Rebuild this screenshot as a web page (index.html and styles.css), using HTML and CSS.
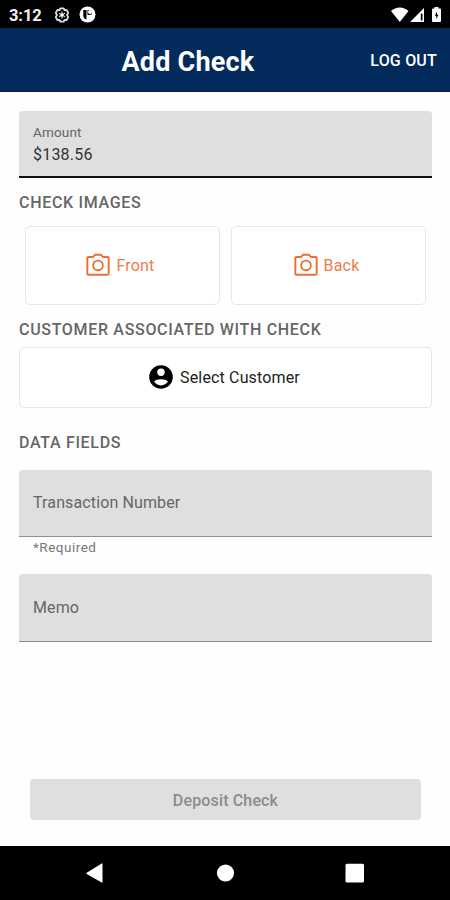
FILE: index.html
```html
<!DOCTYPE html>
<html lang="en">
<head>
<meta charset="utf-8">
<title>Add Check</title>
<link rel="stylesheet" href="styles.css">
</head>
<body>
<div class="status">
  <span class="clock">3:12</span>
  <svg class="gear" width="16" height="16" viewBox="0 0 16 16" fill="none" stroke="#dcdcdc"><path stroke-width="1.800" stroke-linejoin="round" d="M6.300 1.300h3.400l.8 1.900 2.100-.2 1.700 2.900L13 8l1.300 2.100-1.700 2.900-2.100-.2-.8 1.900H6.300l-.8-1.900-2.100.2-1.700-2.900L3 8 1.700 5.900 3.400 3l2.100.2z"/><path stroke-width="1.200" d="M8 4.500v7M5 6.200l6 3.600M11 6.200 5 9.800"/><circle cx="8" cy="8" r="1.600" fill="#fff" stroke="none"/></svg>
  <svg class="badge" width="17" height="17" viewBox="0 0 17 17"><circle cx="8.500" cy="8.500" r="8" fill="#fff"/><path d="M4.300 4h3.200v9.500c-2.200-.5-3.200-2-3.200-4zM8.500 4h2a2.500 2.500 0 0 1 0 5h-2z" fill="#000"/><circle cx="11" cy="6" r="2" fill="#fff"/></svg>
  <span class="grow"></span>
  <svg class="signals" width="53" height="16" viewBox="0 0 53 16"><path fill="#fff" d="M0 4C5-.8 12.500-.8 17.500 4L8.800 15zM19 15 33 1v14z"/><path fill="#000" d="M29.800 6.500h1.700v7h-1.700z"/><path fill="#fff" d="M43.500 1.500V0h4v1.500h1.500q1 0 1 1V14q0 1-1 1h-7q-1 0-1-1V2.500q0-1 1-1z"/><path d="m46 4.500-2.200 4.200h1.500v3.200l2.200-4.200H46z" fill="#000"/></svg>
</div>
<header class="bar"><span></span><h1>Add Check</h1><span class="logout">LOG OUT</span></header>
<main>
  <div class="field active"><span class="caption">Amount</span><span class="value">$138.56</span></div>
  <h2 class="images">CHECK IMAGES</h2>
  <div class="cards">
    <div class="card orange"><svg class="camera" width="24" height="24" viewBox="0 0 24 24" fill="none" stroke="#ec6e31" stroke-width="1.900" stroke-linejoin="round"><path d="M2.500 4h4.600l2-2.300h5.800L16.900 4h4.600q1.200 0 1.200 1.200v15.300q0 1.200-1.200 1.200h-19q-1.200 0-1.200-1.200V5.200Q1.300 4 2.500 4z"/><circle cx="12" cy="12.400" r="4.800"/></svg><span class="front">Front</span></div>
    <div class="card orange"><svg class="camera" width="24" height="24" viewBox="0 0 24 24" fill="none" stroke="#ec6e31" stroke-width="1.900" stroke-linejoin="round"><path d="M2.500 4h4.600l2-2.300h5.800L16.900 4h4.600q1.200 0 1.200 1.200v15.300q0 1.200-1.200 1.200h-19q-1.200 0-1.200-1.200V5.200Q1.300 4 2.500 4z"/><circle cx="12" cy="12.400" r="4.800"/></svg><span class="back">Back</span></div>
  </div>
  <h2 class="customer">CUSTOMER ASSOCIATED WITH CHECK</h2>
  <div class="card select"><svg width="24" height="24" viewBox="0 0 24 24"><circle cx="12" cy="12" r="11.800"/><circle cx="12" cy="7.200" r="3.700" fill="#fff"/><path fill="#fff" d="M5 16.600c1.500-3.300 12.500-3.300 14 0-1.500 2.300-4 3.900-7 3.900s-5.500-1.600-7-3.900z"/></svg><span>Select Customer</span></div>
  <h2 class="data">DATA FIELDS</h2>
  <div class="field idle"><span>Transaction Number</span></div>
  <p class="hint">*Required</p>
  <div class="field idle memo"><span>Memo</span></div>
  <div class="deposit"><span>Deposit Check</span></div>
</main>
<nav>
  <svg width="450" height="54" viewBox="0 0 450 54" fill="#fff"><path d="M102.500 17.800v18.400q0 .8-.8.400L86.700 28q-.7-.7 0-1.300l15-9.200q.8-.4.800.3z"/><circle cx="225.500" cy="27" r="8.600"/><rect x="345.500" y="17.700" width="18.500" height="18.800" rx="1.500"/></svg>
</nav>
</body>
</html>
```
FILE: styles.css
```css
* { box-sizing: border-box; }
body { margin: 0; width: 450px; height: 900px; display: flex; flex-direction: column; background: #fefefe; font-family: Roboto, sans-serif; overflow: hidden; }
.status { height: 28px; flex: none; background: #000; display: flex; align-items: center; padding: 1px 7px 0 9px; color: #f2f2f2; }
.clock { width: 45px; font-size: 16.500px; font-weight: 700; padding-top: 1px; letter-spacing: -.1px; }
.badge { margin-left: 9px; }
.grow { flex: 1; }
.signals { margin-right: -1px; }
.bar { height: 64px; flex: none; background: #022b5c; border-bottom: 1px solid #14164c; display: grid; grid-template-columns: 121.500px 1fr auto; align-items: center; padding-right: 13px; padding-top: 3px; color: #fff; }
h1 { margin: 0; padding-top: 1px; font-size: 27px; line-height: 32px; font-weight: 700; white-space: nowrap; letter-spacing: .2px; }
.logout { font-size: 16px; font-weight: 500; letter-spacing: .2px; margin-top: -1px; }
main { flex: 1; padding: 19px 18px 0 19px; display: flex; flex-direction: column; }
.field { height: 67px; flex: none; background: #dfdfdf; border-radius: 4px 4px 0 0; padding-left: 14px; display: flex; flex-direction: column; justify-content: center; color: #666; font-size: 16px; }
.active { border-bottom: 2px solid #111; justify-content: flex-start; padding-top: 12px; height: 67px; }
.caption { font-size: 13.500px; line-height: 18px; letter-spacing: .15px; }
.value { line-height: 24px; margin-top: 2px; color: #333; letter-spacing: .2px; }
.idle { border-bottom: 1px solid #8e8e8e; letter-spacing: .12px; padding-bottom: 2px; }
h2 { margin: 0; font-size: 16px; line-height: 20px; font-weight: 500; color: #666; white-space: nowrap; letter-spacing: .68px; }
.images { margin-top: 15px; }
.cards { margin: 13px 6px 0; display: grid; grid-template-columns: 195px 195px; gap: 11px; }
.card { height: 79px; border: 1.500px solid #e6e6e6; border-radius: 5px; background: #fff; display: flex; align-items: center; justify-content: center; gap: 7px; font-size: 16px; }
.orange { color: #ed7c4a; gap: 6px; letter-spacing: .2px; padding: 0 4px 2px 0; }
.orange span { padding-top: 2px; }
.customer { margin-top: 15px; }
.select { height: 61px; margin-top: 7px; color: #222; letter-spacing: .15px; padding: 0 2px 1px 0; }
.select span { padding-top: 1px; }
.data { margin-top: 25px; }
.data + .field { margin-top: 17px; }
.hint { margin: 0 0 0 14px; font-size: 13.500px; line-height: 20px; color: #777; letter-spacing: .5px; }
.memo { margin-top: 17px; height: 68px; padding-bottom: 1px; }
.deposit { margin: 137px 11px 0; height: 41px; border-radius: 4px; background: #dfdfdf; color: #8b8b8b; display: flex; align-items: center; justify-content: center; font-size: 16px; font-weight: 500; padding-top: 1px; letter-spacing: .15px; }
nav { height: 54px; flex: none; background: #000; }
nav svg { display: block; }
```
